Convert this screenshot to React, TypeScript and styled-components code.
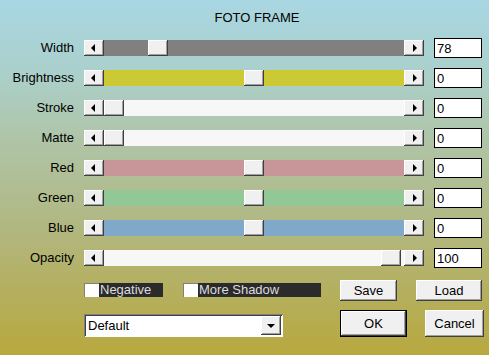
import { Fragment } from "react";
import styled, { createGlobalStyle } from "styled-components";

const GlobalStyle = createGlobalStyle`
  body {
    margin: 0;
  }
`;

const raised = `
  background: #f0f0f0;
  box-shadow: inset -1px -1px 0 #404040, inset 1px 1px 0 #ffffff,
    inset -2px -2px 0 #a0a0a0;
`;

const Dialog = styled.div`
  box-sizing: border-box;
  width: 489px;
  height: 355px;
  padding-top: 10px;
  font-family: "Liberation Sans", Arial, sans-serif;
  font-size: 13px;
  color: #000;
  background: linear-gradient(
    to bottom,
    #a8d6e2 0%,
    #abd0cc 20%,
    #afc4a6 40%,
    #b1b884 62%,
    #b8a83e 100%
  );
`;

const Title = styled.h1`
  margin: 0 0 7px;
  padding-left: 25px;
  font-size: 13px;
  font-weight: normal;
  line-height: 16px;
  text-align: center;
`;

const Rows = styled.div`
  display: grid;
  grid-template-columns: 74px 340px 48px;
  grid-auto-rows: 30px;
  column-gap: 10px;
  align-items: center;
`;

const Label = styled.span`
  text-align: right;
  line-height: 16px;
`;

const Scrollbar = styled.div`
  display: flex;
  height: 16px;
`;

const ArrowButton = styled.div`
  ${raised}
  display: flex;
  justify-content: center;
  align-items: center;
  width: 20px;
  height: 16px;
  flex: none;
`;

const Triangle = styled.span<{ $dir: "left" | "right" | "down" }>`
  width: 0;
  height: 0;
  ${({ $dir }) =>
    $dir === "left"
      ? "border-top: 4px solid transparent; border-bottom: 4px solid transparent; border-right: 4px solid #000; margin-left: -2px;"
      : $dir === "right"
      ? "border-top: 4px solid transparent; border-bottom: 4px solid transparent; border-left: 4px solid #000; margin-left: 2px;"
      : "border-left: 4px solid transparent; border-right: 4px solid transparent; border-top: 4px solid #000;"}
`;

const Track = styled.div<{ $color: string }>`
  position: relative;
  flex: 1;
  background: ${({ $color }) => $color};
`;

const Thumb = styled.div<{ $pos: number }>`
  ${raised}
  position: absolute;
  top: 0;
  left: ${({ $pos }) => $pos}px;
  width: 20px;
  height: 16px;
`;

const ValueBox = styled.div`
  box-sizing: border-box;
  height: 20px;
  padding: 2px 2px 0;
  background: #fff;
  border: 1px solid #000;
  line-height: 15px;
`;

const Bottom = styled.div`
  display: flex;
  margin-top: 7px;
  padding-left: 84px;
`;

const LeftColumn = styled.div`
  display: flex;
  flex-direction: column;
  gap: 17px;
  width: 256px;
  padding-top: 3px;
`;

const CheckRow = styled.div`
  display: flex;
  gap: 20px;
`;

const Check = styled.label`
  display: flex;
  height: 14px;
`;

const CheckBox = styled.span`
  box-sizing: border-box;
  width: 15px;
  height: 14px;
  background: #fff;
  border-top: 1px solid #808080;
  border-left: 1px solid #808080;
`;

const CheckText = styled.span<{ $width: number }>`
  box-sizing: border-box;
  width: ${({ $width }) => $width}px;
  padding-left: 1px;
  background: #2b2b2b;
  color: #dcdcdc;
  line-height: 14px;
`;

const Select = styled.div`
  box-sizing: border-box;
  display: flex;
  align-items: center;
  justify-content: space-between;
  width: 199px;
  height: 23px;
  padding: 2px;
  background: #fff;
  box-shadow: inset 1px 1px 0 #808080, inset -1px -1px 0 #ffffff,
    inset 2px 2px 0 #404040;
`;

const SelectText = styled.span`
  padding-left: 2px;
  line-height: 16px;
`;

const SelectButton = styled(ArrowButton)`
  height: 19px;
`;

const RightColumn = styled.div`
  display: flex;
  flex-direction: column;
  gap: 9px;
`;

const ButtonRow = styled.div<{ $gap: number }>`
  display: flex;
  gap: ${({ $gap }) => $gap}px;
`;

const Button = styled.button<{ $w: number; $h: number; $default?: boolean }>`
  ${raised}
  box-sizing: border-box;
  width: ${({ $w }) => $w}px;
  height: ${({ $h }) => $h}px;
  padding: 0;
  border: ${({ $default }) => ($default ? "1px solid #000" : "none")};
  font-family: "Liberation Sans", Arial, sans-serif;
  font-size: 13px;
  color: #000;
`;

interface Slider {
  label: string;
  value: number;
  min: number;
  max: number;
  color: string;
}

const sliders: Slider[] = [
  { label: "Width", value: 78, min: 0, max: 500, color: "#808080" },
  { label: "Brightness", value: 0, min: -255, max: 255, color: "#cbc934" },
  { label: "Stroke", value: 0, min: 0, max: 100, color: "#f7f7f7" },
  { label: "Matte", value: 0, min: 0, max: 100, color: "#f7f7f7" },
  { label: "Red", value: 0, min: -255, max: 255, color: "#c89598" },
  { label: "Green", value: 0, min: -255, max: 255, color: "#91c896" },
  { label: "Blue", value: 0, min: -255, max: 255, color: "#80a8c9" },
  { label: "Opacity", value: 100, min: 0, max: 101, color: "#f7f7f7" },
];

const TRACK = 300;
const THUMB = 20;

export default function App() {
  return (
    <>
      <GlobalStyle />
      <Dialog>
        <Title>FOTO FRAME</Title>
        <Rows>
          {sliders.map((s) => (
            <Fragment key={s.label}>
              <Label>{s.label}</Label>
              <Scrollbar>
                <ArrowButton>
                  <Triangle $dir="left" />
                </ArrowButton>
                <Track $color={s.color}>
                  <Thumb
                    $pos={Math.round(
                      ((s.value - s.min) / (s.max - s.min)) * (TRACK - THUMB)
                    )}
                  />
                </Track>
                <ArrowButton>
                  <Triangle $dir="right" />
                </ArrowButton>
              </Scrollbar>
              <ValueBox>{s.value}</ValueBox>
            </Fragment>
          ))}
        </Rows>
        <Bottom>
          <LeftColumn>
            <CheckRow>
              <Check>
                <CheckBox />
                <CheckText $width={64}>Negative</CheckText>
              </Check>
              <Check>
                <CheckBox />
                <CheckText $width={123}>More Shadow</CheckText>
              </Check>
            </CheckRow>
            <Select>
              <SelectText>Default</SelectText>
              <SelectButton>
                <Triangle $dir="down" />
              </SelectButton>
            </Select>
          </LeftColumn>
          <RightColumn>
            <ButtonRow $gap={19}>
              <Button $w={57} $h={21}>Save</Button>
              <Button $w={66} $h={21}>Load</Button>
            </ButtonRow>
            <ButtonRow $gap={18}>
              <Button $w={67} $h={27} $default>OK</Button>
              <Button $w={59} $h={27}>Cancel</Button>
            </ButtonRow>
          </RightColumn>
        </Bottom>
      </Dialog>
    </>
  );
}
